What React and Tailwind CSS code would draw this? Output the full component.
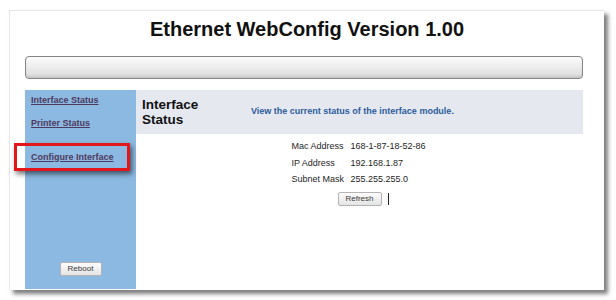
const font = { fontFamily: '"Liberation Sans", Arial, sans-serif' };

function Btn({ children, className = '' }) {
  return (
    <button
      className={`block h-[14px] rounded-[2px] border border-[#b4b4b4] bg-gradient-to-b from-[#fdfdfd] to-[#e4e4e4] text-[8px] leading-[12px] text-[#3a3a3a] ${className}`}
    >
      {children}
    </button>
  );
}

const rows = [
  ['Mac Address', '168-1-87-18-52-86'],
  ['IP Address', '192.168.1.87'],
  ['Subnet Mask', '255.255.255.0'],
];

export default function App() {
  return (
    <div className="relative w-[616px] h-[300px] overflow-hidden bg-white" style={font}>
      <div className="ml-[9px] mt-[10px] w-[595px] pb-[1px] border-t border-l border-[#e6e6e6] bg-white shadow-[4px_4px_4px_rgba(0,0,0,0.5)]">
        <h1 className="pt-[7px] text-center text-[20px] leading-[23px] font-bold text-[#111]">
          Ethernet WebConfig Version 1.00
        </h1>

        <div className="ml-[15px] mt-[15px] w-[558px] h-[23px] rounded-[4px] border border-[#858585] bg-gradient-to-b from-[#fbfbfb] via-[#ececec] to-[#dadada] shadow-[inset_0_-2px_2px_rgba(0,0,0,0.08)]" />

        <div className="ml-[15px] mt-[11px] w-[558px] h-[199px] flex">
          {/* left menu */}
          <div className="w-[111px] bg-[#8cb9e1] flex flex-col pl-[6px] pt-[5px] pb-[13px]">
            <a className="text-[9px] leading-[11px] font-bold underline text-[#4e3a5e]">Interface Status</a>
            <a className="mt-[11.5px] text-[9px] leading-[11px] font-bold underline text-[#4e3a5e]">Printer Status</a>
            <a className="mt-[23px] text-[9px] leading-[11px] font-bold underline text-[#4e3a5e]">Configure Interface</a>
            <div className="mt-auto flex justify-center pr-[6px]">
              <Btn className="w-[42px]">Reboot</Btn>
            </div>
          </div>

          {/* content */}
          <div className="flex-1 flex flex-col">
            <div className="h-[44px] bg-[#e6e8f0] flex items-center">
              <div className="w-[115px] pl-[6px] text-[13.5px] leading-[15px] font-bold text-[#111]">
                Interface
                <br />
                Status
              </div>
              <p className="text-[9px] font-bold text-[#2b5c9b]">View the current status of the interface module.</p>
            </div>

            <div className="mt-[4px] grid grid-cols-[59px_77px] justify-center text-[9px] leading-[16.5px] text-[#1e1e1e]">
              {rows.map(([k, v]) => (
                <div key={k} className="contents">
                  <span>{k}</span>
                  <span>{v}</span>
                </div>
              ))}
            </div>

            <div className="mt-[4px] flex justify-center">
              <div className="relative flex">
                <Btn className="w-[44px]">Refresh</Btn>
                <span className="absolute left-full top-[1px] ml-[6px] w-[1px] h-[12px] bg-[#222]" />
              </div>
            </div>
          </div>
        </div>
      </div>

      {/* annotation box */}
      <div className="absolute left-[14px] top-[143px] w-[116px] h-[28px] border-[3px] border-[#e3161c] shadow-[2px_3px_5px_rgba(0,0,0,0.55)]" />
    </div>
  );
}
